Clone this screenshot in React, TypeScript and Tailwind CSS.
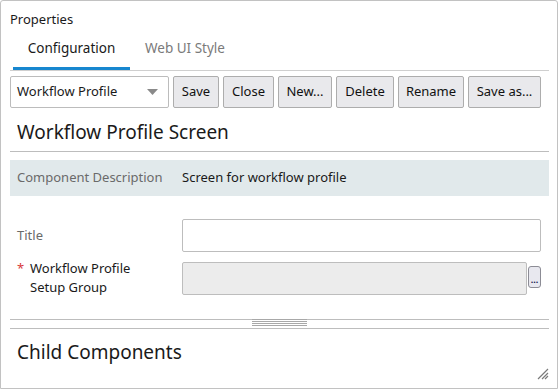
import React from "react";

const font = { fontFamily: '"Noto Sans", "Open Sans", sans-serif' };

function Btn({ children, w }: { children: React.ReactNode; w: string }) {
  return (
    <button
      className={`h-[32px] ${w} shrink-0 rounded-[2px] border border-[#adadad] bg-[#e9e9ec] text-[13px] text-[#111] flex items-center justify-center`}
    >
      {children}
    </button>
  );
}

export default function App() {
  return (
    <div
      className="w-[558px] h-[389px] bg-white border border-[#c2c2c2] rounded-tl-[3px] rounded-tr-[3px] flex flex-col relative text-[#1a1a1a] overflow-hidden"
      style={font}
    >
      {/* title */}
      <div className="pl-[9px] pt-[9px] h-[28px] text-[13px] leading-[18px]">Properties</div>

      {/* tabs */}
      <div className="mx-[9px] mr-[8px] h-[42px] border-b border-[#cfcfcf] flex items-stretch">
        <div className="relative w-[117px] ml-[3px] flex items-center justify-center text-[13.5px] pb-[3px]">
          Configuration
          <div className="absolute left-0 right-0 bottom-0 h-[3px] bg-[#1787cf]" />
        </div>
        <div className="ml-[15px] flex items-center text-[13.5px] text-[#7a7a7a] pb-[3px]">Web UI Style</div>
      </div>

      {/* toolbar */}
      <div className="mt-[5px] pl-[9px] flex gap-[4px]">
        <div className="h-[32px] w-[159px] rounded-[2px] border border-[#bcbcbc] bg-white flex items-center justify-between pl-[6px] pr-[10px] text-[13px]">
          <span>Workflow Profile</span>
          <svg width="11" height="6" viewBox="0 0 11 6">
            <path d="M0 0 H11 L5.5 6 Z" fill="#8a8a8a" />
          </svg>
        </div>
        <Btn w="w-[46px]">Save</Btn>
        <Btn w="w-[51px]">Close</Btn>
        <Btn w="w-[54px]">New...</Btn>
        <Btn w="w-[58px]">Delete</Btn>
        <Btn w="w-[66px]">Rename</Btn>
        <Btn w="w-[73px]">Save as...</Btn>
      </div>

      {/* heading */}
      <div className="mt-[12px] mx-[9px] mr-[8px] h-[32px] border-b border-[#bdbdbd] pl-[7px] text-[19px] leading-[24px] flex items-start">
        Workflow Profile Screen
      </div>

      {/* description */}
      <div className="mt-[8px] mx-[9px] mr-[8px] h-[36px] bg-[#e1e9eb] flex items-center text-[13px]">
        <div className="w-[172px] pl-[7px] text-[#6a6a6a]">Component Description</div>
        <div>Screen for workflow profile</div>
      </div>

      {/* title row */}
      <div className="mt-[23px] pl-[9px] pr-[16px] flex items-center">
        <div className="w-[172px] pl-[7px] text-[13px] text-[#6a6a6a]">Title</div>
        <div className="flex-1 h-[33px] border border-[#bdbdbd] rounded-[2px] bg-white" />
      </div>

      {/* setup group row */}
      <div className="mt-[10px] pl-[9px] pr-[16px] flex items-start">
        <div className="w-[172px] pl-[7px] -mt-[3px] flex text-[13px] leading-[19px]">
          <span className="text-[#d83a3a] w-[13px] shrink-0">*</span>
          <span>
            Workflow Profile
            <br />
            Setup Group
          </span>
        </div>
        <div className="flex-1 h-[33px] border border-[#bdbdbd] rounded-[2px] bg-[#ececec]" />
        <div className="ml-[1px] mt-[4px] w-[13px] h-[22px] border border-[#8c8c95] rounded-[3px] bg-[#e8e8ef] flex items-end justify-center pb-[3px]">
          <span className="text-[9px] leading-[9px] text-[#1a1a50] font-bold">...</span>
        </div>
      </div>

      {/* splitter */}
      <div className="mt-[22px] mx-[9px] mr-[8px] h-[10px] border-t border-b border-[#bdbdbd] relative">
        <div className="absolute left-[242px] top-[-1px] w-[55px] flex flex-col gap-[1px]">
          <div className="h-[1px] bg-[#a8a8a8]" />
          <div className="h-[1px] bg-[#a8a8a8]" />
          <div className="h-[1px] bg-[#a8a8a8]" />
          <div className="h-[1px] bg-[#a8a8a8]" />
        </div>
      </div>

      {/* child components */}
      <div className="mt-[10px] pl-[16px] text-[19px] leading-[26px]">Child Components</div>

      {/* resize grip */}
      <svg className="absolute right-[8px] bottom-[8px]" width="12" height="12" viewBox="0 0 12 12">
        <path d="M11 1 L1 11 M11 5 L5 11 M11 8 L8 11" stroke="#7a7a7a" strokeWidth="1.2" />
      </svg>
    </div>
  );
}
